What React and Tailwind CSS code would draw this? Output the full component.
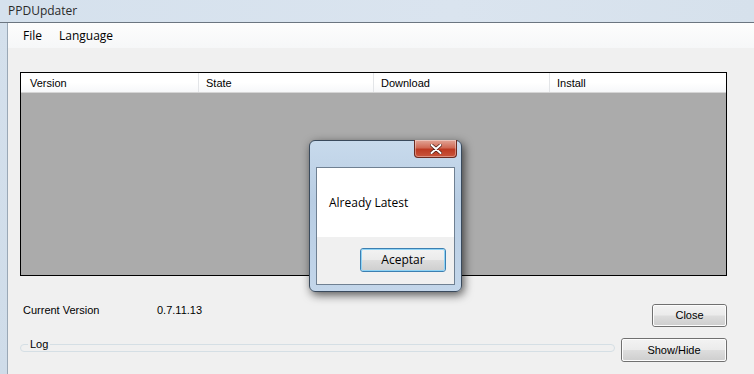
import React from "react";

const seg = { fontFamily: '"Open Sans", "Noto Sans", sans-serif' };
const ms = { fontFamily: '"Liberation Sans", Arial, sans-serif' };

function WinButton({ children, className = "", focused = false }) {
  return (
    <div
      className={`flex items-center justify-center rounded-[3px] border ${
        focused ? "border-[#3c7fb1]" : "border-[#707070]"
      } ${className}`}
    >
      <div
        className={`flex h-full w-full items-center justify-center rounded-[2px] border ${
          focused ? "border-[#8fd3f5]" : "border-[#fcfcfc]"
        } bg-[linear-gradient(to_bottom,#f2f2f2_0%,#ebebeb_48%,#dddddd_52%,#cfcfcf_100%)]`}
      >
        {children}
      </div>
    </div>
  );
}

export default function App() {
  return (
    <div className="relative flex h-[374px] w-[754px] flex-col overflow-hidden bg-[#f0f0f0] text-black">
      {/* title bar */}
      <div className="flex h-[22px] items-center bg-[linear-gradient(to_right,#d5e1ed,#dae4ef_60%,#d6e1ec)] pl-[8px] text-[12px] text-[#2a2a2a]" style={seg}>
        PPDUpdater
      </div>
      <div className="h-px bg-[#6b7580]" />
      <div className="flex flex-1">
        {/* left frame */}
        <div className="w-[7px] bg-[linear-gradient(to_bottom,#d4e0ec,#cfdce9)]" />
        <div className="w-px bg-[#9aa8b6]" />
        <div className="flex flex-1 flex-col">
          {/* menu */}
          <div className="flex h-[25px] items-center gap-[17px] bg-[linear-gradient(to_bottom,#fdfdfd,#f6f7f8)] pl-[15px] text-[12px]" style={seg}>
            <span>File</span>
            <span>Language</span>
          </div>
          {/* content */}
          <div className="flex flex-1 flex-col pl-[12px] pr-[27px] pt-[24px]" style={ms}>
            {/* list view */}
            <div className="flex h-[204px] flex-col border border-black bg-[#ababab]">
              <div className="flex h-[20px] border-b border-[#d5d5d5] bg-[linear-gradient(to_bottom,#ffffff,#ffffff_50%,#f6f7f9)] text-[11px] leading-[21px]">
                <div className="h-full w-[177px] pl-[9px]">Version</div>
                <div className="h-full w-[175px] border-l border-[#e3e5e8] pl-[7px]">State</div>
                <div className="h-full w-[176px] border-l border-[#e3e5e8] pl-[7px]">Download</div>
                <div className="h-full flex-1 border-l border-[#e3e5e8] pl-[7px]">Install</div>
              </div>
            </div>
            {/* current version + close */}
            <div className="mt-[28px] flex h-[23px] items-center justify-between text-[11px]">
              <div className="flex items-center pb-[11px]">
                <span className="ml-[3px] w-[134px]">Current Version</span>
                <span>0.7.11.13</span>
              </div>
              <WinButton className="h-[23px] w-[75px] text-[11px]">Close</WinButton>
            </div>
            {/* log + show/hide */}
            <div className="mt-[11px] flex h-[24px] items-start justify-between text-[11px]">
              <div className="relative mt-[6px] h-[8px] w-[595px] rounded-[4px] border border-[#d5dfe5]">
                <span className="absolute left-[7px] top-[-7px] bg-[#f0f0f0] px-[2px] leading-[13px]">Log</span>
              </div>
              <WinButton className="h-[24px] w-[106px] text-[11px]">Show/Hide</WinButton>
            </div>
          </div>
        </div>
      </div>

      {/* dialog */}
      <div className="absolute left-[309px] top-[140px] flex h-[152px] w-[153px] flex-col rounded-[6px] border border-[#3a4a5c] bg-[linear-gradient(to_bottom,#c8daec,#b8cde3_40%,#c3d6ea)] shadow-[2px_3px_10px_rgba(0,0,0,0.65)]">
        <div className="relative h-[26px]">
          <div className="absolute right-[4px] top-[-1px] flex h-[18px] w-[43px] items-center justify-center rounded-b-[4px] border border-t-0 border-[#6b2a20] bg-[linear-gradient(to_bottom,#e3a697,#d06a55_45%,#bd3a22_55%,#c9553c)] shadow-[inset_0_0_0_1px_rgba(255,255,255,0.35)]">
            <svg width="12" height="10" viewBox="0 0 12 10">
              <path d="M1.5 1 L10.5 9 M10.5 1 L1.5 9" stroke="#4a1a12" strokeWidth="3.4" strokeLinecap="round" />
              <path d="M1.5 1 L10.5 9 M10.5 1 L1.5 9" stroke="#ffffff" strokeWidth="2" strokeLinecap="round" />
            </svg>
          </div>
        </div>
        <div className="mx-[6px] flex flex-1 flex-col border border-[#6f8092] bg-[#f0f0f0]" style={seg}>
          <div className="flex h-[69px] items-center bg-white pl-[12px] text-[12px]">Already Latest</div>
          <div className="flex flex-1 items-start justify-end pr-[8px] pt-[11px]">
            <WinButton focused className="h-[24px] w-[86px] text-[12px]">Aceptar</WinButton>
          </div>
        </div>
        <div className="h-[6px]" />
      </div>
    </div>
  );
}
